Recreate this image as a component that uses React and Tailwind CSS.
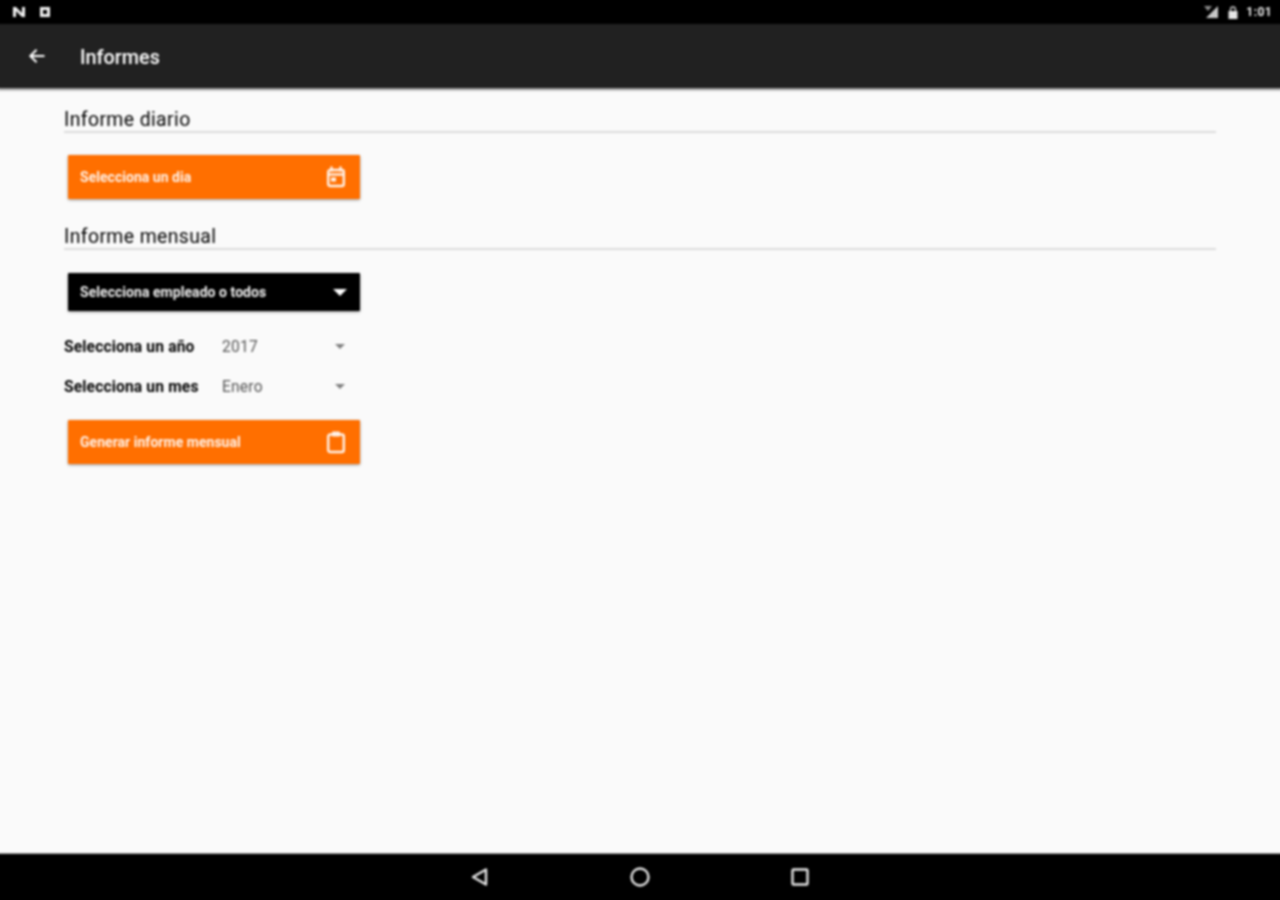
import React from "react";

function CalendarIcon() {
  return (
    <svg width="24" height="24" viewBox="0 0 24 24" fill="none" className="text-[#fff3ea]">
      <path d="M7.5 2.5v3M16.5 2.5v3" stroke="currentColor" strokeWidth="2.4" strokeLinecap="round" />
      <rect x="4.2" y="5" width="15.6" height="16" rx="2" stroke="currentColor" strokeWidth="2.4" />
      <path d="M4 9.5h16" stroke="currentColor" strokeWidth="2.4" />
      <rect x="7" y="12.5" width="5" height="4" fill="currentColor" />
    </svg>
  );
}

function ClipboardIcon() {
  return (
    <svg width="24" height="24" viewBox="0 0 24 24" fill="none" className="text-[#fff3ea]">
      <rect x="4.2" y="4.5" width="15.6" height="17.5" rx="2" stroke="currentColor" strokeWidth="2.4" />
      <rect x="8" y="1.5" width="8" height="5" rx="1" fill="currentColor" />
    </svg>
  );
}

function Heading({ children }) {
  return (
    <div className="border-b-2 border-[#dcdcdc] h-[30px] flex items-center">
      <span className="text-[19.4px] leading-none text-black tracking-[0.4px] pt-[6px]">{children}</span>
    </div>
  );
}

function OrangeButton({ label, icon, className }) {
  return (
    <button className={"ml-1 w-[292px] h-[44px] bg-[#ff6f00] rounded-[1px] shadow-[0_1px_3px_rgba(0,0,0,0.4)] flex items-center justify-between pl-3 pr-3 " + className}>
      <span className="text-[14px] pt-[1px] font-bold tracking-[0.03px] text-[#fff3ea]">{label}</span>
      {icon}
    </button>
  );
}

function SpinnerRow({ label, value }) {
  return (
    <div className="flex items-center h-10">
      <span className="w-[158px] pt-[3px] text-[15.6px] font-bold text-black tracking-[0.15px]">{label}</span>
      <span className="w-[113px] pt-[3px] text-[15.6px] text-[#555555] tracking-[0.2px]">{value}</span>
      <span className="w-0 h-0 border-x-[5px] border-x-transparent border-t-[5px] border-t-[#808080]" />
    </div>
  );
}

export default function App() {
  return (
    <div className="w-[1280px] h-[900px] overflow-hidden">
      <div className="-m-[2px] w-[1284px] h-[904px] flex flex-col bg-[#fafafa] blur-[0.8px] font-['Roboto',sans-serif]">
        <div className="h-[26px] pt-[2px] bg-black flex items-center justify-between pl-[14px] pr-[10px] shrink-0">
          <div className="flex items-center gap-[13px]">
            <svg width="14" height="12" viewBox="0 0 14 12">
              <path d="M1 1h3l6 6V1h3v10h-3L4 5v6H1z" fill="#f0f0f0" />
            </svg>
            <svg width="12" height="12" viewBox="0 0 12 12">
              <path fillRule="evenodd" d="M1 1h10v10H1zM4 4v4h4V4z" fill="#f0f0f0" />
            </svg>
          </div>
          <div className="flex items-center gap-[6px]">
            <svg width="18" height="14" viewBox="0 0 18 14" className="mr-[1px]">
              <path d="M1 1h8l-4 5z" fill="#8c8c8c" />
              <path d="M15 1v12H3z" fill="#c8c8c8" />
            </svg>
            <svg width="10" height="13" viewBox="0 0 10 13">
              <path d="M2.5 5V3.5a2.5 2.5 0 0 1 5 0V5" fill="none" stroke="#cfcfcf" strokeWidth="1.3" />
              <rect x="0.5" y="5" width="9" height="8" fill="#e6e6e6" />
            </svg>
            <span className="text-[12px] font-bold text-[#f0f0f0] tracking-[0.4px] pl-[2px]">1:01</span>
          </div>
        </div>

        <div className="h-16 bg-[#212121] flex items-center shrink-0 shadow-[0_2px_2px_rgba(0,0,0,0.45)] relative">
          <svg width="20" height="20" viewBox="0 0 24 24" fill="none" className="ml-[29px]">
            <path d="M21 12H4M11.5 4.5 4 12l7.5 7.5" stroke="#ffffff" strokeWidth="2.4" />
          </svg>
          <span className="ml-[33px] pt-[3px] text-[19.8px] font-medium text-white">Informes</span>
        </div>

        <div className="flex-1 px-[66px] pt-[15px]">
          <Heading>Informe diario</Heading>
          <OrangeButton className="mt-[22px]" label="Selecciona un dia" icon={<CalendarIcon />} />
          <div className="mt-[21px]">
            <Heading>Informe mensual</Heading>
          </div>
          <button className="mt-[23px] ml-1 w-[292px] h-[38px] bg-black rounded-[1px] shadow-[0_1px_3px_rgba(0,0,0,0.4)] flex items-center justify-between pl-3 pr-[12px]">
            <span className="text-[14px] pt-[1px] font-bold tracking-[0.05px] text-[#f2f2f2]">Selecciona empleado o todos</span>
            <span className="w-0 h-0 border-x-[7px] border-x-transparent border-t-[7px] border-t-white mr-[1px]" />
          </button>
          <div className="mt-[15px]">
            <SpinnerRow label="Selecciona un año" value="2017" />
            <SpinnerRow label="Selecciona un mes" value="Enero" />
          </div>
          <OrangeButton className="mt-[14px]" label="Generar informe mensual" icon={<ClipboardIcon />} />
        </div>

        <div className="h-[49px] pb-[2px] bg-black border-t border-[#9a9a9a] flex items-center justify-center gap-[139px] shrink-0">
          <svg width="20" height="20" viewBox="0 0 20 20" fill="none">
            <path d="M16 2.5v15L3 10z" stroke="#e6e6e6" strokeWidth="2.4" strokeLinejoin="round" />
          </svg>
          <svg width="22" height="22" viewBox="0 0 22 22" fill="none">
            <circle cx="11" cy="11" r="8.5" stroke="#e6e6e6" strokeWidth="2.4" />
          </svg>
          <svg width="20" height="20" viewBox="0 0 20 20" fill="none">
            <rect x="2.5" y="2.5" width="15" height="15" rx="1" stroke="#e6e6e6" strokeWidth="2.4" />
          </svg>
        </div>
      </div>
    </div>
  );
}
